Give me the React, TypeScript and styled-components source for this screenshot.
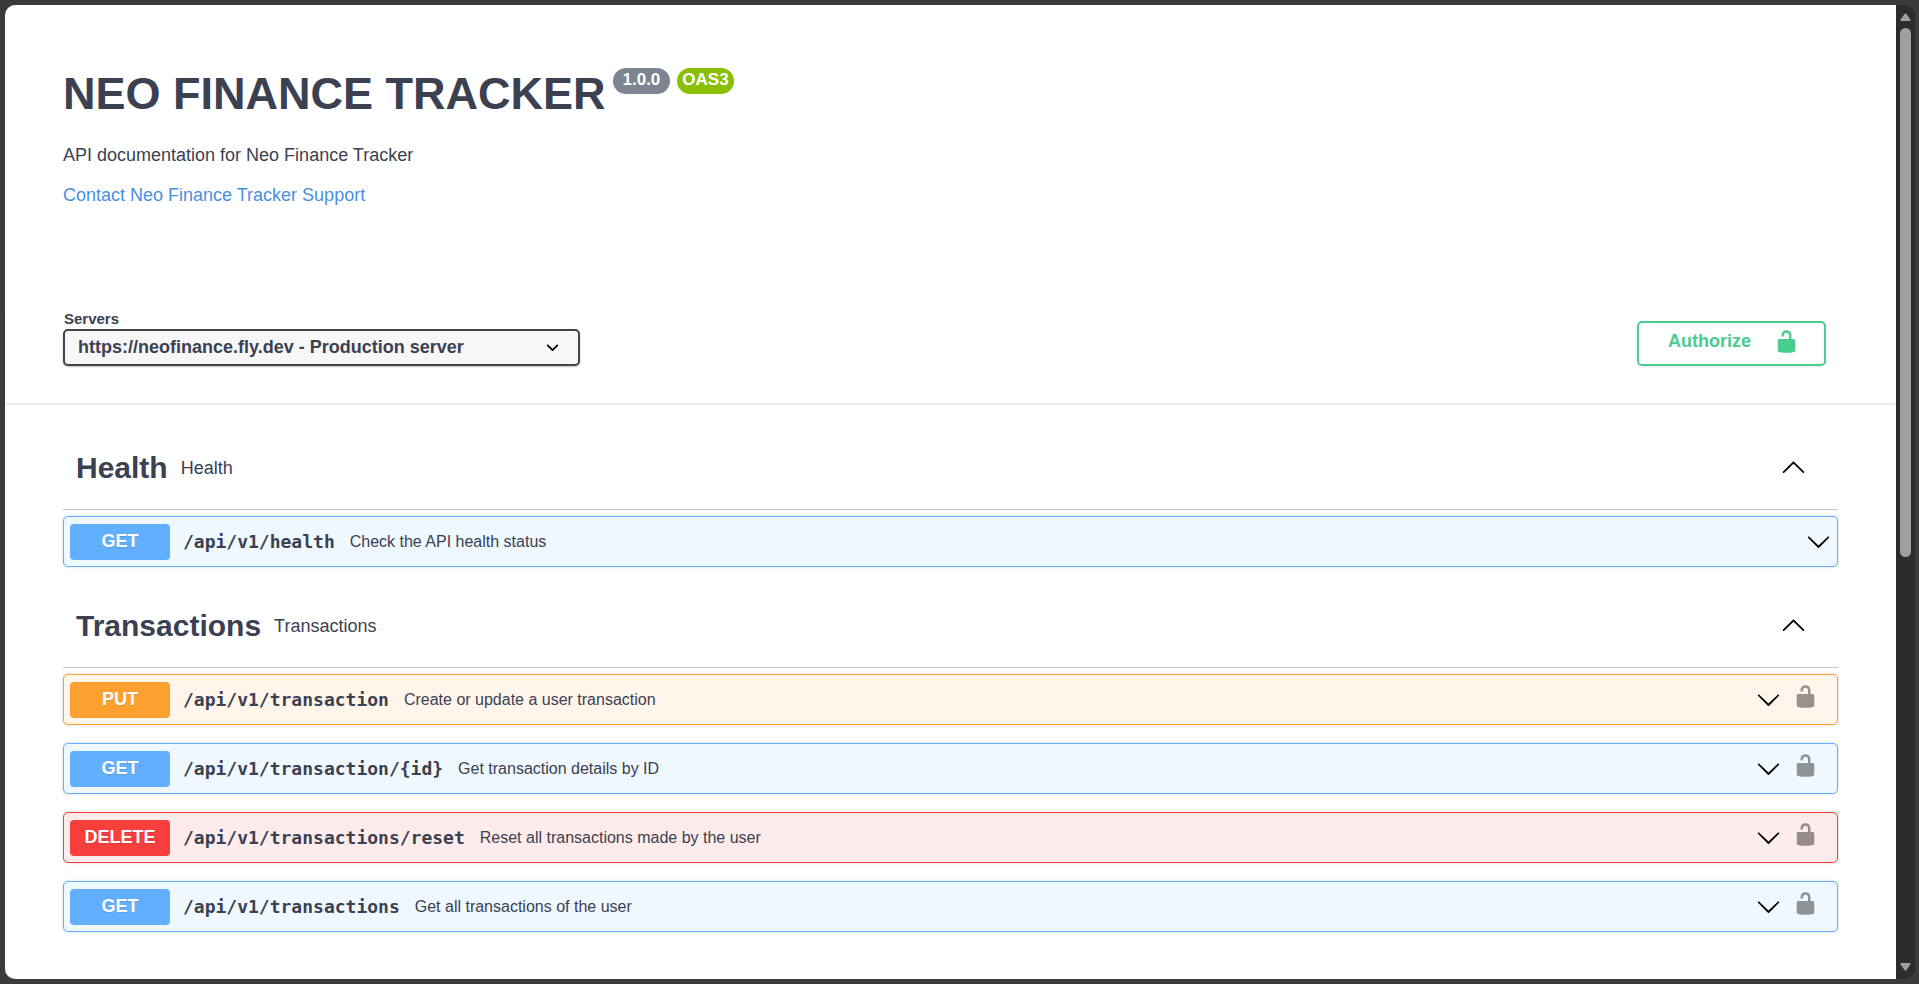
import React from "react";
import styled, { createGlobalStyle } from "styled-components";

const ink = "#3b4151";

const methods = {
  GET: { main: "#61affe", tint: "#eff7ff" },
  PUT: { main: "#fca130", tint: "#fff5ea" },
  DELETE: { main: "#f93e3e", tint: "#feebeb" },
} as const;

type Method = keyof typeof methods;

interface Operation {
  method: Method;
  path: string;
  summary: string;
  secured: boolean;
}

interface Tag {
  name: string;
  description: string;
  operations: Operation[];
}

const tags: Tag[] = [
  {
    name: "Health",
    description: "Health",
    operations: [
      { method: "GET", path: "/api/v1/health", summary: "Check the API health status", secured: false },
    ],
  },
  {
    name: "Transactions",
    description: "Transactions",
    operations: [
      { method: "PUT", path: "/api/v1/transaction", summary: "Create or update a user transaction", secured: true },
      { method: "GET", path: "/api/v1/transaction/{id}", summary: "Get transaction details by ID", secured: true },
      { method: "DELETE", path: "/api/v1/transactions/reset", summary: "Reset all transactions made by the user", secured: true },
      { method: "GET", path: "/api/v1/transactions", summary: "Get all transactions of the user", secured: true },
    ],
  },
];

const GlobalStyle = createGlobalStyle`
  *, *::before, *::after { box-sizing: border-box; }
  body {
    margin: 0;
    background: #3b3b3b;
    color: ${ink};
    font-family: "Liberation Sans", Arial, sans-serif;
  }
  button, select { font-family: inherit; color: inherit; }
`;

const Shell = styled.div`
  display: flex;
  min-height: 100vh;
  padding: 5px 4px 5px 5px;
`;

const Page = styled.main`
  flex: 1;
  min-width: 0;
  background: #fff;
  border-radius: 10px 0 0 10px;
`;

const ScrollTrack = styled.div`
  display: flex;
  flex-direction: column;
  align-items: center;
  width: 19px;
  padding: 8px 0;
  background: #2c2c2c;
  border-radius: 0 10px 10px 0;
`;

const ScrollRail = styled.div`
  flex: 1;
  padding: 7px 0;
`;

const ScrollThumb = styled.div`
  width: 11px;
  height: 57%;
  border-radius: 6px;
  background: #9f9f9f;
`;

const Info = styled.header`
  padding: 63px 58px 0;
`;

const TitleRow = styled.div`
  display: flex;
  align-items: flex-start;
  gap: 7px;
`;

const Title = styled.h1`
  margin: 0;
  font-size: 45px;
  line-height: 52px;
`;

const VersionBadge = styled.span<{ $color: string; $pad: number }>`
  height: 26px;
  padding: 0 ${(p) => p.$pad}px;
  border-radius: 26px;
  background: ${(p) => p.$color};
  color: #fff;
  font-size: 17px;
  font-weight: 700;
  line-height: 24px;
`;

const Description = styled.p`
  margin: 25px 0 20px;
  font-size: 18px;
  line-height: 20px;
`;

const ContactLink = styled.a`
  display: block;
  width: fit-content;
  color: #4990e2;
  font-size: 18px;
  line-height: 20px;
  text-decoration: none;
`;

const SchemeBar = styled.section`
  display: flex;
  align-items: flex-end;
  justify-content: space-between;
  margin-top: 105px;
  padding: 0 70px 37px 58px;
  box-shadow: 0 1px 2px rgba(0, 0, 0, 0.15);
`;

const ServerField = styled.div`
  display: flex;
  flex-direction: column;
`;

const ServerLabel = styled.label`
  padding: 0 1px 1px;
  font-size: 15px;
  font-weight: 700;
  line-height: 18px;
`;

const SelectBox = styled.div`
  position: relative;
  width: 517px;
  height: 37px;
`;

const ServerSelect = styled.select`
  appearance: none;
  width: 100%;
  height: 100%;
  padding: 0 50px 1px 13px;
  border: 2px solid #41444e;
  border-radius: 5px;
  background: #f7f7f7;
  box-shadow: 0 1px 2px rgba(0, 0, 0, 0.25);
  font-size: 18px;
  font-weight: 700;
`;

const SelectArrow = styled.svg`
  position: absolute;
  top: 6px;
  right: 15px;
  pointer-events: none;
`;

const AuthorizeButton = styled.button`
  display: flex;
  justify-content: space-between;
  align-items: center;
  width: 189px;
  height: 45px;
  padding: 0 25px 4px 29px;
  border: 2px solid #49cc90;
  border-radius: 5px;
  background: transparent;
  box-shadow: 0 1px 2px rgba(0, 0, 0, 0.1);
  color: #49cc90;
  font-size: 18px;
  font-weight: 700;
`;

const Operations = styled.div`
  display: flex;
  flex-direction: column;
  gap: 25px;
  padding: 31px 58px 46px;
`;

const TagHeader = styled.div`
  display: flex;
  align-items: center;
  gap: 13px;
  height: 76px;
  padding: 0 32px 8px 13px;
  border-bottom: 1px solid #c4c6ca;
`;

const TagName = styled.h2`
  margin: 0;
  font-size: 30px;
  line-height: 36px;
`;

const TagDescription = styled.p`
  flex: 1;
  margin: 0;
  font-size: 18px;
  line-height: 20px;
`;

const OperationList = styled.div`
  display: flex;
  flex-direction: column;
  gap: 18px;
  padding-top: 6px;
`;

const OperationRow = styled.div<{ $method: Method }>`
  display: flex;
  align-items: center;
  height: 51px;
  padding: 0 6px;
  border: 1px solid ${(p) => methods[p.$method].main};
  border-radius: 5px;
  background: ${(p) => methods[p.$method].tint};
  box-shadow: 0 0 3px rgba(0, 0, 0, 0.19);
`;

const MethodBadge = styled.span<{ $method: Method }>`
  width: 100px;
  height: 36px;
  border-radius: 4px;
  background: ${(p) => methods[p.$method].main};
  color: #fff;
  font-size: 18px;
  font-weight: 700;
  line-height: 34px;
  text-align: center;
  text-shadow: 0 1px 0 rgba(0, 0, 0, 0.1);
`;

const PathText = styled.code`
  padding: 0 15px 0 13px;
  font-family: "DejaVu Sans Mono", monospace;
  font-size: 18px;
  font-weight: 700;
  line-height: 22px;
`;

const Summary = styled.span`
  flex: 1;
  font-size: 16px;
  line-height: 20px;
`;

const IconButton = styled.button`
  display: flex;
  padding: 0;
  border: 0;
  background: transparent;
  color: #000;
`;

const CollapseButton = styled(IconButton)`
  padding-bottom: 3px;
`;

const LockButton = styled(IconButton)`
  padding: 0 13px 6px 12px;
  opacity: 0.4;
`;

const Chevron = ({ up = false }: { up?: boolean }) => (
  <svg width="25" height="25" viewBox="0 0 20 20" fill="currentColor" aria-hidden="true">
    <path
      d={
        up
          ? "M17.418 14.908c.272.268.709.268.979 0s.271-.701 0-.969l-7.908-7.83c-.27-.268-.707-.268-.979 0l-7.908 7.83c-.27.268-.27.701 0 .969.271.268.709.268.979 0L10 7.767l7.418 7.141z"
          : "M17.418 6.109c.272-.268.709-.268.979 0s.271.701 0 .969l-7.908 7.83c-.27.268-.707.268-.979 0l-7.908-7.83c-.27-.268-.27-.701 0-.969.271-.268.709-.268.979 0L10 13.25l7.418-7.141z"
      }
    />
  </svg>
);

const Unlocked = () => (
  <svg width="25" height="25" viewBox="0 0 20 20" fill="currentColor" aria-hidden="true">
    <path d="M15.8 8H14V5.6C14 2.703 12.665 1 10 1 7.334 1 6 2.703 6 5.6V6h2v-.801C8 3.754 8.797 3 10 3c1.203 0 2 .754 2 2.199V8H4c-.553 0-1 .646-1 1.199V17c0 .549.428 1.139.951 1.307l1.197.387C5.672 18.861 6.55 19 7.1 19h5.8c.549 0 1.428-.139 1.951-.307l1.196-.387c.524-.167.953-.757.953-1.306V9.199C17 8.646 16.352 8 15.8 8z" />
  </svg>
);

const ScrollArrow = ({ down = false }: { down?: boolean }) => (
  <svg width="11" height="8" viewBox="0 0 11 8" fill="#9f9f9f" aria-hidden="true">
    <path d={down ? "M1 0h9q1 0 .6 1L6.6 7q-1 1-2.2 0L.4 1Q0 0 1 0z" : "M1 8h9q1 0 .6-1L6.6 1q-1-1-2.2 0L.4 7Q0 8 1 8z"} />
  </svg>
);

export default function App() {
  return (
    <>
      <GlobalStyle />
      <Shell>
        <Page>
          <Info>
            <TitleRow>
              <Title>NEO FINANCE TRACKER</Title>
              <VersionBadge $color="#7d8492" $pad={10}>1.0.0</VersionBadge>
              <VersionBadge $color="#89bf04" $pad={5}>OAS3</VersionBadge>
            </TitleRow>
            <Description>API documentation for Neo Finance Tracker</Description>
            <ContactLink href="#contact">Contact Neo Finance Tracker Support</ContactLink>
          </Info>
          <SchemeBar>
            <ServerField>
              <ServerLabel htmlFor="server">Servers</ServerLabel>
              <SelectBox>
                <ServerSelect id="server">
                  <option>https://neofinance.fly.dev - Production server</option>
                </ServerSelect>
                <SelectArrow width="25" height="25" viewBox="0 0 20 20" aria-hidden="true">
                  <path d="M13.418 7.859c.271-.268.709-.268.978 0 .27.268.272.701 0 .969l-3.908 3.83c-.27.268-.707.268-.979 0l-3.908-3.83c-.27-.267-.27-.701 0-.969.271-.268.709-.268.978 0L10 11l3.418-3.141z" />
                </SelectArrow>
              </SelectBox>
            </ServerField>
            <AuthorizeButton type="button">
              Authorize
              <Unlocked />
            </AuthorizeButton>
          </SchemeBar>
          <Operations>
            {tags.map((tag) => (
              <section key={tag.name}>
                <TagHeader>
                  <TagName>{tag.name}</TagName>
                  <TagDescription>{tag.description}</TagDescription>
                  <CollapseButton type="button" aria-label={`Collapse ${tag.name}`}>
                    <Chevron up />
                  </CollapseButton>
                </TagHeader>
                <OperationList>
                  {tag.operations.map((op) => (
                    <OperationRow key={op.method + op.path} $method={op.method}>
                      <MethodBadge $method={op.method}>{op.method}</MethodBadge>
                      <PathText>{op.path}</PathText>
                      <Summary>{op.summary}</Summary>
                      <IconButton type="button" aria-label={`Expand ${op.path}`}>
                        <Chevron />
                      </IconButton>
                      {op.secured && (
                        <LockButton type="button" aria-label="Authorization required">
                          <Unlocked />
                        </LockButton>
                      )}
                    </OperationRow>
                  ))}
                </OperationList>
              </section>
            ))}
          </Operations>
        </Page>
        <ScrollTrack aria-hidden="true">
          <ScrollArrow />
          <ScrollRail>
            <ScrollThumb />
          </ScrollRail>
          <ScrollArrow down />
        </ScrollTrack>
      </Shell>
    </>
  );
}
